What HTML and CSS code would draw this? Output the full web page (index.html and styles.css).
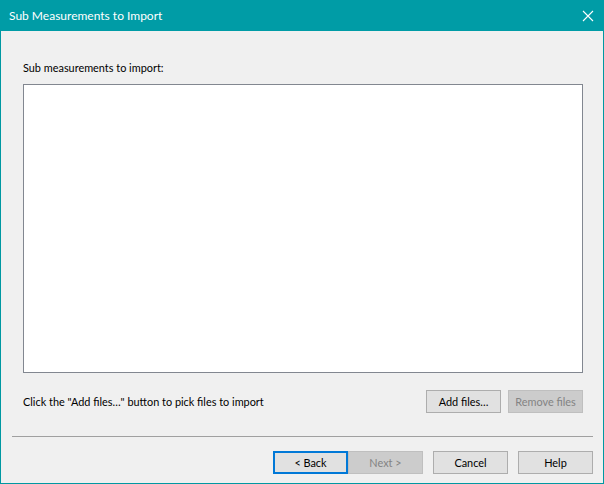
FILE: index.html
```html
<!DOCTYPE html>
<html lang="en">
<head>
    <meta charset="UTF-8">
    <title>Sub Measurements to Import</title>
    <link rel="stylesheet" href="styles.css">
</head>
<body>
    <div class="window">
        <header class="titlebar">
            <span class="title">Sub Measurements to Import</span>
            <svg class="close" width="12" height="12" viewBox="0 0 12 12">
                <path d="M1 1 L11 11 M11 1 L1 11" stroke="#fff" stroke-width="1.1" fill="none"/>
            </svg>
        </header>

        <div class="content">
            <label class="list-label">Sub measurements to import:</label>
            <div class="listbox"></div>
            <div class="file-row">
                <span class="hint">Click the "Add files…" button to pick files to import</span>
                <div class="file-buttons">
                    <button class="btn">Add files…</button>
                    <button class="btn" disabled>Remove files</button>
                </div>
            </div>
        </div>

        <hr class="separator">

        <footer class="footer">
            <div class="pair">
                <button class="btn default">&lt; Back</button>
                <button class="btn" disabled>Next &gt;</button>
            </div>
            <button class="btn">Cancel</button>
            <button class="btn">Help</button>
        </footer>
    </div>
</body>
</html>
```

FILE: styles.css
```css
body {
    margin: 0;
    font-family: Lato, "Liberation Sans", sans-serif;
    font-size: 10.9px;
    color: #000;
}

.window {
    width: 604px;
    height: 484px;
    box-sizing: border-box;
    border: 1px solid #0098a2;
    border-top: none;
    background-color: #f0f0f0;
    display: flex;
    flex-direction: column;
}

.titlebar {
    height: 31px;
    margin: 0 -1px;
    background-color: #009ca6;
    display: flex;
    align-items: center;
    justify-content: space-between;
    padding: 0 10px 0 9px;
    flex-shrink: 0;
}

.title {
    color: #fff;
    font-size: 12px;
    margin-top: -1px;
}

.content {
    padding: 0 20px 0 22px;
    display: flex;
    flex-direction: column;
}

.list-label {
    margin-top: 29px;
    height: 16px;
    line-height: 16px;
    margin-bottom: 8px;
}

.listbox {
    height: 289px;
    box-sizing: border-box;
    border: 1px solid #828790;
    background-color: #fff;
}

.file-row {
    display: flex;
    justify-content: space-between;
    align-items: center;
    margin-top: 17px;
}

.file-buttons {
    display: flex;
    gap: 7px;
}

.btn {
    width: 75px;
    height: 23px;
    box-sizing: border-box;
    padding: 0;
    font-family: Lato, "Liberation Sans", sans-serif;
    font-size: 10.9px;
    color: #000;
    background-color: #e1e1e1;
    border: 1px solid #adadad;
    border-radius: 0;
}

.btn:disabled {
    background-color: #cccccc;
    border-color: #bfbfbf;
    color: #838383;
}

.btn.default {
    border: 2px solid #0078d7;
}

.separator {
    margin: 23px 10px 0 11px;
    border: none;
    border-top: 1px solid #a0a0a0;
    height: 0;
}

.footer {
    display: flex;
    justify-content: flex-end;
    gap: 10px;
    padding-right: 10px;
    margin-top: 14px;
}

.pair {
    display: flex;
}
```
